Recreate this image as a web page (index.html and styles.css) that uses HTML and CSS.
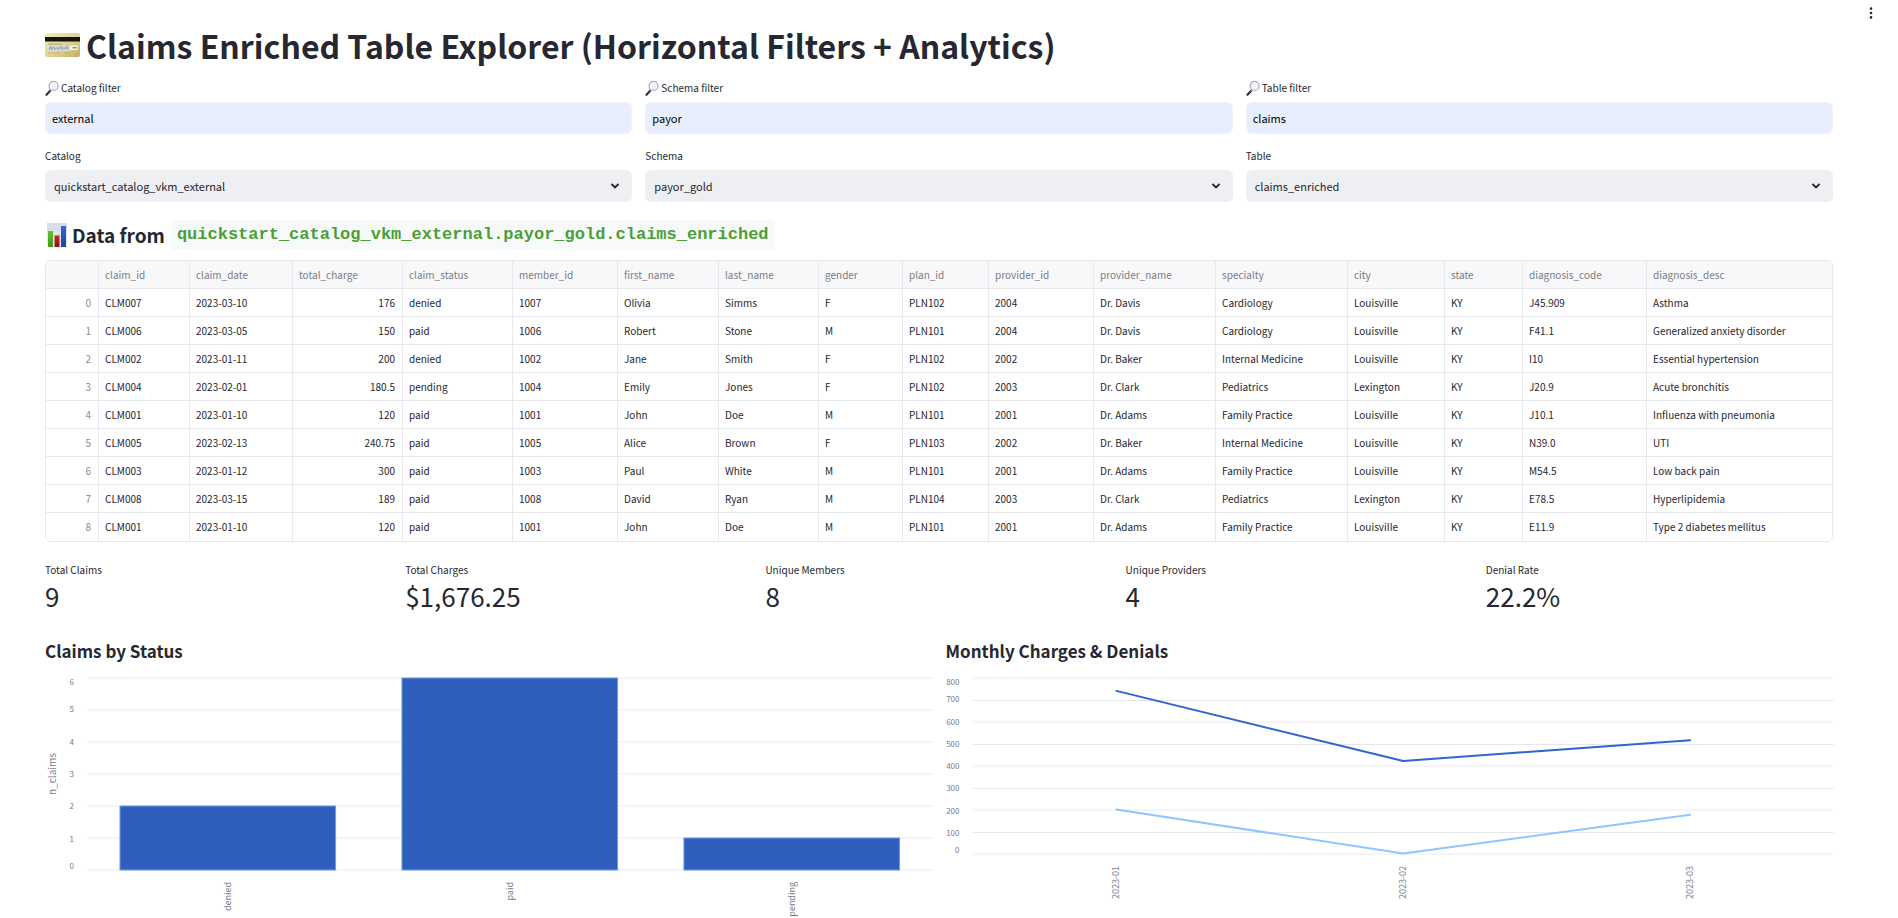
FILE: index.html
```html
<!DOCTYPE html>
<html lang="en">
<head>
<meta charset="utf-8">
<meta name="viewport" content="width=device-width, initial-scale=1">
<title>Claims Enriched Table Explorer</title>
<link rel="stylesheet" href="styles.css">
</head>
<body>
<svg class="defs" aria-hidden="true">
  <defs>
    <linearGradient id="gold" x1="0" y1="0" x2="1" y2="1">
      <stop offset="0" stop-color="#f3ecb4"/><stop offset="0.55" stop-color="#dfd48e"/><stop offset="1" stop-color="#bfae62"/>
    </linearGradient>
    <linearGradient id="sheet" x1="0" y1="0" x2="0" y2="1">
      <stop offset="0" stop-color="#d3dce8"/><stop offset="1" stop-color="#eef2f7"/>
    </linearGradient>
    <linearGradient id="green" x1="0" y1="0" x2="0" y2="1">
      <stop offset="0" stop-color="#62c234"/><stop offset="1" stop-color="#3f9a1d"/>
    </linearGradient>
    <linearGradient id="red" x1="0" y1="0" x2="0" y2="1">
      <stop offset="0" stop-color="#c5292b"/><stop offset="1" stop-color="#8c1113"/>
    </linearGradient>
    <linearGradient id="blue" x1="0" y1="0" x2="0" y2="1">
      <stop offset="0" stop-color="#3567d6"/><stop offset="1" stop-color="#1f43a0"/>
    </linearGradient>
    <symbol id="lens" viewBox="0 0 14 17">
      <path d="M5.200 10.800 L1.500 14.800" stroke="#303136" stroke-width="2.200" stroke-linecap="round"/>
      <path d="M6.200 9.400 L4.900 11" stroke="#8b8e96" stroke-width="1.400"/>
      <circle cx="8.600" cy="5.900" r="4.500" fill="#f1f4fa" stroke="#a9adba" stroke-width="1.200"/>
      <path d="M5.800 5.600 A3 3 0 0 1 8.600 2.900" fill="none" stroke="#fff" stroke-width="1"/>
    </symbol>
    <symbol id="chevron" viewBox="0 0 10 8">
      <path d="M1.500 2 L5 5.500 L8.500 2" fill="none" stroke="#262730" stroke-width="1.800"/>
    </symbol>
  </defs>
</svg>

<button class="menu" type="button" aria-label="Main menu">
  <svg width="4" height="12" viewBox="0 0 4 12"><circle cx="2" cy="1.600" r="1.300"/><circle cx="2" cy="6" r="1.300"/><circle cx="2" cy="10.400" r="1.300"/></svg>
</button>

<main class="page">
  <h1 class="title">
    <svg class="card-icon" viewBox="0 0 35 24" aria-hidden="true">
      <rect width="35" height="24" rx="2" fill="url(#gold)"/>
      <rect y="4" width="35" height="4.500" fill="#15130d"/>
      <rect x="3" y="10.500" width="14" height="1" fill="#b3a765"/>
      <rect x="3" y="12.500" width="22" height="5.500" fill="#d6d8cc"/>
      <rect x="25" y="12.500" width="7.500" height="4.500" fill="#f5f4ec"/>
      <path d="M4 16.500 L6 13.500 L6.500 16.500 L9 14 L10 16.500 L12 14.500 L13.500 16.500 L16 13.500 L17 16.500 L19 14.500 L20 16 L22 13.500 L23 16.500" fill="none" stroke="#7394cf" stroke-width="0.900"/>
      <rect x="27.500" y="14.300" width="4" height="1" fill="#55534a"/>
      <path d="M3 20 H15 M19 20 H25" stroke="#b5a868" stroke-width="0.800"/>
    </svg>
    <span>Claims Enriched Table Explorer (Horizontal Filters + Analytics)</span>
  </h1>

  <form class="filters">
    <div class="field">
      <label for="f-catalog"><svg class="lens"><use href="#lens"/></svg>Catalog filter</label>
      <input id="f-catalog" type="text" value="external">
    </div>
    <div class="field">
      <label for="f-schema"><svg class="lens"><use href="#lens"/></svg>Schema filter</label>
      <input id="f-schema" type="text" value="payor">
    </div>
    <div class="field">
      <label for="f-table"><svg class="lens"><use href="#lens"/></svg>Table filter</label>
      <input id="f-table" type="text" value="claims">
    </div>
    <div class="field">
      <label for="s-catalog">Catalog</label>
      <div class="select"><select id="s-catalog"><option>quickstart_catalog_vkm_external</option></select><svg class="chevron"><use href="#chevron"/></svg></div>
    </div>
    <div class="field">
      <label for="s-schema">Schema</label>
      <div class="select"><select id="s-schema"><option>payor_gold</option></select><svg class="chevron"><use href="#chevron"/></svg></div>
    </div>
    <div class="field">
      <label for="s-table">Table</label>
      <div class="select"><select id="s-table"><option>claims_enriched</option></select><svg class="chevron"><use href="#chevron"/></svg></div>
    </div>
  </form>

  <h2 class="source">
    <svg class="bars-icon" viewBox="0 0 20 24" aria-hidden="true">
      <rect width="20" height="24" fill="url(#sheet)"/>
      <path d="M0 6 H20 M0 12 H20 M0 18 H20" stroke="#c3cedb" stroke-width="0.500"/>
      <rect x="1" y="8" width="5" height="16" fill="url(#green)"/>
      <rect x="7.500" y="12.500" width="5" height="11.500" fill="url(#red)"/>
      <rect x="14" y="3" width="5" height="21" fill="url(#blue)"/>
    </svg>
    <span>Data from</span>
    <code>quickstart_catalog_vkm_external.payor_gold.claims_enriched</code>
  </h2>

  <div class="grid">
    <table>
      <colgroup><col><col><col><col><col><col><col><col><col><col><col><col><col><col><col><col><col></colgroup>
      <thead><tr><th></th><th>claim_id</th><th>claim_date</th><th>total_charge</th><th>claim_status</th><th>member_id</th><th>first_name</th><th>last_name</th><th>gender</th><th>plan_id</th><th>provider_id</th><th>provider_name</th><th>specialty</th><th>city</th><th>state</th><th>diagnosis_code</th><th>diagnosis_desc</th></tr></thead>
      <tbody>
        <tr><td>0</td><td>CLM007</td><td>2023-03-10</td><td>176</td><td>denied</td><td>1007</td><td>Olivia</td><td>Simms</td><td>F</td><td>PLN102</td><td>2004</td><td>Dr. Davis</td><td>Cardiology</td><td>Louisville</td><td>KY</td><td>J45.909</td><td>Asthma</td></tr>
        <tr><td>1</td><td>CLM006</td><td>2023-03-05</td><td>150</td><td>paid</td><td>1006</td><td>Robert</td><td>Stone</td><td>M</td><td>PLN101</td><td>2004</td><td>Dr. Davis</td><td>Cardiology</td><td>Louisville</td><td>KY</td><td>F41.1</td><td>Generalized anxiety disorder</td></tr>
        <tr><td>2</td><td>CLM002</td><td>2023-01-11</td><td>200</td><td>denied</td><td>1002</td><td>Jane</td><td>Smith</td><td>F</td><td>PLN102</td><td>2002</td><td>Dr. Baker</td><td>Internal Medicine</td><td>Louisville</td><td>KY</td><td>I10</td><td>Essential hypertension</td></tr>
        <tr><td>3</td><td>CLM004</td><td>2023-02-01</td><td>180.5</td><td>pending</td><td>1004</td><td>Emily</td><td>Jones</td><td>F</td><td>PLN102</td><td>2003</td><td>Dr. Clark</td><td>Pediatrics</td><td>Lexington</td><td>KY</td><td>J20.9</td><td>Acute bronchitis</td></tr>
        <tr><td>4</td><td>CLM001</td><td>2023-01-10</td><td>120</td><td>paid</td><td>1001</td><td>John</td><td>Doe</td><td>M</td><td>PLN101</td><td>2001</td><td>Dr. Adams</td><td>Family Practice</td><td>Louisville</td><td>KY</td><td>J10.1</td><td>Influenza with pneumonia</td></tr>
        <tr><td>5</td><td>CLM005</td><td>2023-02-13</td><td>240.75</td><td>paid</td><td>1005</td><td>Alice</td><td>Brown</td><td>F</td><td>PLN103</td><td>2002</td><td>Dr. Baker</td><td>Internal Medicine</td><td>Louisville</td><td>KY</td><td>N39.0</td><td>UTI</td></tr>
        <tr><td>6</td><td>CLM003</td><td>2023-01-12</td><td>300</td><td>paid</td><td>1003</td><td>Paul</td><td>White</td><td>M</td><td>PLN101</td><td>2001</td><td>Dr. Adams</td><td>Family Practice</td><td>Louisville</td><td>KY</td><td>M54.5</td><td>Low back pain</td></tr>
        <tr><td>7</td><td>CLM008</td><td>2023-03-15</td><td>189</td><td>paid</td><td>1008</td><td>David</td><td>Ryan</td><td>M</td><td>PLN104</td><td>2003</td><td>Dr. Clark</td><td>Pediatrics</td><td>Lexington</td><td>KY</td><td>E78.5</td><td>Hyperlipidemia</td></tr>
        <tr><td>8</td><td>CLM001</td><td>2023-01-10</td><td>120</td><td>paid</td><td>1001</td><td>John</td><td>Doe</td><td>M</td><td>PLN101</td><td>2001</td><td>Dr. Adams</td><td>Family Practice</td><td>Louisville</td><td>KY</td><td>E11.9</td><td>Type 2 diabetes mellitus</td></tr>
      </tbody>
    </table>
  </div>

  <dl class="metrics">
    <div><dt>Total Claims</dt><dd>9</dd></div>
    <div><dt>Total Charges</dt><dd>$1,676.25</dd></div>
    <div><dt>Unique Members</dt><dd>8</dd></div>
    <div><dt>Unique Providers</dt><dd>4</dd></div>
    <div><dt>Denial Rate</dt><dd>22.2%</dd></div>
  </dl>

  <div class="charts">
    <section>
      <h3>Claims by Status</h3>
      <div class="chart chart-status">
        <div class="y-title"><span>n_claims</span></div>
        <div class="y-axis"><span>6</span><span>5</span><span>4</span><span>3</span><span>2</span><span>1</span><span>0</span></div>
        <svg class="plot" role="img" aria-label="Claims by status">
          <g class="soft">
            <line x1="0" x2="100%" y1="1" y2="1"/><line x1="0" x2="100%" y1="33" y2="33"/><line x1="0" x2="100%" y1="65" y2="65"/><line x1="0" x2="100%" y1="97" y2="97"/><line x1="0" x2="100%" y1="129" y2="129"/><line x1="0" x2="100%" y1="161" y2="161"/><line x1="0" x2="100%" y1="193" y2="193"/>
          </g>
          <g class="bar">
            <rect x="3.900%" y="129" width="25.500%" height="64"/>
            <rect x="37.250%" y="1" width="25.500%" height="192"/>
            <rect x="70.600%" y="161" width="25.500%" height="32"/>
          </g>
        </svg>
        <div class="x-axis"><span>denied</span><span>paid</span><span>pending</span></div>
      </div>
    </section>
    <section>
      <h3>Monthly Charges &amp; Denials</h3>
      <div class="chart chart-monthly">
        <div class="y-axis"><span>800</span><span>700</span><span>600</span><span>500</span><span>400</span><span>300</span><span>200</span><span>100</span><span>0</span></div>
        <svg class="plot" role="img" aria-label="Monthly charges and denials">
          <g class="soft">
            <line x1="0" x2="100%" y1="1" y2="1"/><line x1="0" x2="100%" y1="45" y2="45"/><line x1="0" x2="100%" y1="89" y2="89"/><line x1="0" x2="100%" y1="133" y2="133"/><line x1="0" x2="100%" y1="177" y2="177"/>
          </g>
          <g class="thin">
            <line x1="0" x2="100%" y1="23.500" y2="23.500"/><line x1="0" x2="100%" y1="67.500" y2="67.500"/><line x1="0" x2="100%" y1="111.500" y2="111.500"/><line x1="0" x2="100%" y1="155.500" y2="155.500"/>
          </g>
          <g class="charges"><line x1="16.670%" y1="13.900" x2="50%" y2="84"/><line x1="50%" y1="84" x2="83.330%" y2="63.200"/></g>
          <g class="denials"><line x1="16.670%" y1="132.500" x2="50%" y2="176.500"/><line x1="50%" y1="176.500" x2="83.330%" y2="137.800"/></g>
        </svg>
        <div class="x-axis"><span>2023-01</span><span>2023-02</span><span>2023-03</span></div>
      </div>
    </section>
  </div>
</main>
</body>
</html>
```
FILE: styles.css
```css
* { box-sizing: border-box; }

body {
  margin: 0;
  background: #fff;
  color: #262730;
  font-family: "Noto Sans CJK SC", "Noto Sans", sans-serif;
  font-size: 10px;
  line-height: 16px;
}

.defs { position: absolute; width: 0; height: 0; }

.menu {
  position: absolute;
  top: 3px;
  right: 17px;
  display: grid;
  place-items: center;
  width: 20px;
  height: 20px;
  padding: 0;
  border: 0;
  background: none;
  fill: #262730;
}

.page { padding: 23px 65px 0 45px; }

h1, h2, h3, dl, dd { margin: 0; }

.title {
  display: flex;
  align-items: center;
  gap: 6px;
  font-size: 32px;
  font-weight: 700;
  line-height: 44px;
}
.card-icon { flex: none; width: 35px; height: 24px; }

.filters {
  display: grid;
  grid-template-columns: repeat(3, 1fr);
  gap: 14px 13px;
  margin-top: 13px;
}
.field label {
  display: flex;
  align-items: center;
  gap: 2px;
  height: 16px;
  margin-bottom: 6px;
}
.lens { width: 14px; height: 17px; }

.field input,
.field select {
  display: block;
  width: 100%;
  height: 32px;
  border: 0;
  border-radius: 6px;
  font: inherit;
  font-size: 11px;
  line-height: 16px;
}
.field input {
  padding: 0 6px;
  border: 1px solid #f0f2f6;
  background: #e8eefe;
  color: #000;
}
.field select {
  appearance: none;
  padding: 0 32px 0 9px;
  background: #eeeff3;
  color: #262730;
}
.select { position: relative; }
.chevron {
  position: absolute;
  top: 12px;
  right: 12px;
  width: 10px;
  height: 8px;
  pointer-events: none;
}

.source {
  display: flex;
  align-items: center;
  margin-top: 18px;
  font-size: 19px;
  font-weight: 700;
  line-height: 30px;
}
.bars-icon { flex: none; width: 20px; height: 24px; margin: 0 5px 0 2px; }
.source code {
  margin-left: 6px;
  padding: 0 6px;
  border-radius: 4px;
  background: #f8f9fb;
  color: #4a9f35;
  font-family: "Liberation Mono", monospace;
  font-size: 17px;
}

.grid {
  margin-top: 10px;
  overflow: hidden;
  border: 1px solid #e6e7ea;
  border-radius: 6px;
}
table {
  width: 100%;
  table-layout: fixed;
  border-collapse: separate;
  border-spacing: 0;
}
col:nth-child(1) { width: 53px; }
col:nth-child(2) { width: 91px; }
col:nth-child(3) { width: 103px; }
col:nth-child(4) { width: 110px; }
col:nth-child(5) { width: 110px; }
col:nth-child(6) { width: 105px; }
col:nth-child(7) { width: 101px; }
col:nth-child(8) { width: 100px; }
col:nth-child(9) { width: 84px; }
col:nth-child(10) { width: 86px; }
col:nth-child(11) { width: 105px; }
col:nth-child(12) { width: 122px; }
col:nth-child(13) { width: 132px; }
col:nth-child(14) { width: 97px; }
col:nth-child(15) { width: 78px; }
col:nth-child(16) { width: 124px; }
col:nth-child(17) { width: 186px; }
th, td {
  height: 28px;
  padding: 0 6px;
  border-right: 1px solid #e8e9ec;
  border-bottom: 1px solid #e8e9ec;
  text-align: left;
  white-space: nowrap;
}
th {
  background: #f7f8fa;
  color: #7b7c84;
  font-weight: 400;
}
td:first-child { color: #8b8c93; }
td:first-child, td:nth-child(4) { padding-right: 7px; text-align: right; }
th:last-child, td:last-child { border-right: 0; }
tbody tr:last-child td { border-bottom: 0; }

.metrics {
  display: grid;
  grid-template-columns: repeat(5, 1fr);
  gap: 13px;
  margin-top: 20px;
}
.metrics dd { font-size: 26px; line-height: 36px; }

.charts {
  display: grid;
  grid-template-columns: repeat(2, 1fr);
  gap: 13px;
  margin-top: 24px;
}
h3 { font-size: 17px; font-weight: 700; line-height: 26px; }

.chart {
  display: grid;
  margin-top: 13px;
  color: #777b8d;
  font-size: 8px;
  line-height: 10px;
}
.chart-status { grid-template-columns: 14px 28px 1fr; }
.chart-monthly { grid-template-columns: 27px 1fr; }
.y-title { display: grid; place-items: center; }
.y-title span, .x-axis span { writing-mode: vertical-rl; transform: rotate(180deg); }
.y-title span { font-size: 10px; }

.y-axis { display: flex; flex-direction: column; padding-right: 13px; }
.y-axis span { flex: 2; display: flex; align-items: center; justify-content: flex-end; }
.y-axis span:first-child { flex: 1; align-items: flex-start; }
.y-axis span:last-child { flex: 1; align-items: flex-end; }

.plot { display: block; width: 100%; overflow: visible; }
.chart-status .plot { height: 194px; }
.chart-monthly .plot { height: 178px; }
.soft line { stroke: #f4f5fa; stroke-width: 2; }
.thin line { stroke: #e6e7ec; stroke-width: 1; }
.bar rect { fill: #2f5ebd; stroke: #6c9fe0; stroke-width: 1; }
.charges line { stroke: #2f66cb; stroke-width: 2; stroke-linecap: round; }
.denials line { stroke: #90c5ff; stroke-width: 2; stroke-linecap: round; }

.x-axis {
  grid-column: -2;
  display: grid;
  grid-template-columns: repeat(3, 1fr);
  justify-items: center;
  align-items: start;
  padding-top: 11px;
  font-size: 9px;
}
```
